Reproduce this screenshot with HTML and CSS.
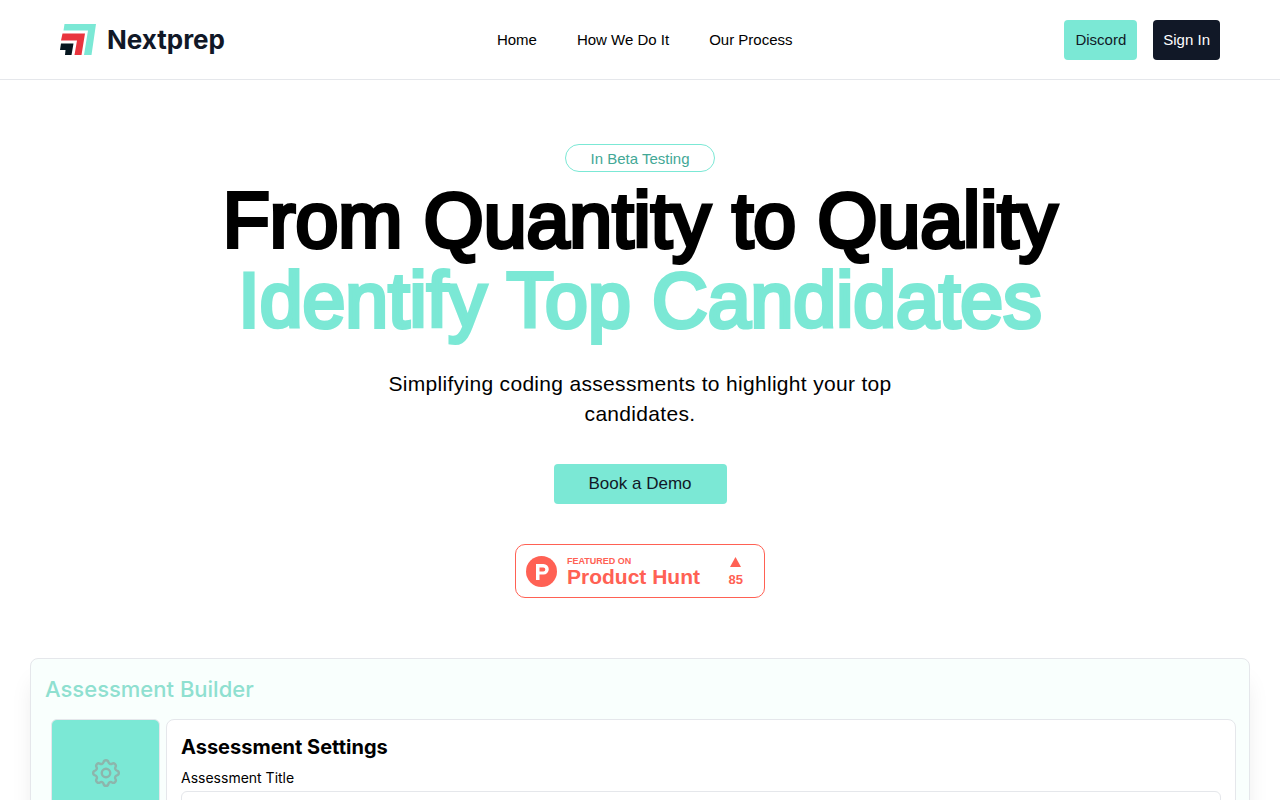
FILE: index.html
```html
<!DOCTYPE html>
<html lang="en">
<head>
<meta charset="utf-8">
<meta name="viewport" content="width=device-width, initial-scale=1">
<title>Nextprep</title>
<link rel="stylesheet" href="styles.css">
</head>
<body>

<header class="header">
  <a class="logo" href="#">
    <svg class="logo-mark" width="37" height="32" viewBox="0 0 37 32" aria-hidden="true">
      <path fill="#7be8d5" d="M4.500 0H36L31.500 31H24L28 6.500H3.500Z"/>
      <path fill="#e9353e" d="M2.500 9.500H25L21.500 31H14.500L17 16.500H1Z"/>
      <path fill="#06161f" d="M1 19.500H13.500L11.500 31H5L5.500 26H0Z"/>
    </svg>
    <span class="logo-text">Nextprep</span>
  </a>
  <nav class="nav">
    <a href="#">Home</a>
    <a href="#how">How We Do It</a>
    <a href="#process">Our Process</a>
  </nav>
  <div class="header-buttons">
    <button class="btn btn-mint" type="button">Discord</button>
    <button class="btn btn-dark" type="button">Sign In</button>
  </div>
</header>

<main>
  <section class="hero">
    <div class="beta">In Beta Testing</div>
    <h1 class="title">From Quantity to Quality<br><span class="title-mint">Identify Top Candidates</span></h1>
    <p class="subtitle">Simplifying coding assessments to highlight your top candidates.</p>
    <button class="btn btn-mint btn-demo" type="button">Book a Demo</button>
    <a class="ph" href="#">
      <svg class="ph-logo" width="31" height="31" viewBox="0 0 31 31" aria-hidden="true">
        <circle cx="15.500" cy="15.500" r="15.500" fill="#ff6154"/>
        <path fill="#fff" fill-rule="evenodd" d="M10 8H17.500A5 5 0 0 1 17.500 18.500H13.500V24H10ZM13.500 11.500V15.500H17.300A2 2 0 0 0 17.300 11.500Z"/>
      </svg>
      <span class="ph-text">
        <span class="ph-small">FEATURED ON</span>
        <span class="ph-name">Product Hunt</span>
      </span>
      <span class="ph-votes">
        <svg width="11" height="10" viewBox="0 0 11 10" aria-hidden="true"><path fill="#ff6154" d="M5.500 0L11 10H0Z"/></svg>
        <span>85</span>
      </span>
    </a>
  </section>

  <section class="builder">
    <h2 class="builder-title">Assessment Builder</h2>
    <div class="builder-body">
      <div class="builder-side">
        <svg width="34" height="34" viewBox="0 0 24 24" fill="none" stroke="#8db5ac" stroke-width="1.700" stroke-linecap="round" stroke-linejoin="round" aria-hidden="true">
          <circle cx="12" cy="12" r="3"/>
          <path d="M10.300 4.300c.4-1.800 3-1.800 3.400 0a1.700 1.700 0 0 0 2.600 1.100c1.500-.9 3.300.8 2.400 2.400a1.700 1.700 0 0 0 1 2.500c1.800.4 1.800 3 0 3.400a1.700 1.700 0 0 0-1 2.600c.9 1.500-.9 3.300-2.400 2.400a1.700 1.700 0 0 0-2.600 1c-.4 1.800-3 1.800-3.400 0a1.700 1.700 0 0 0-2.600-1c-1.500.9-3.300-.9-2.400-2.400a1.700 1.700 0 0 0-1-2.600c-1.800-.4-1.800-3 0-3.400a1.700 1.700 0 0 0 1-2.500c-.9-1.600.9-3.300 2.400-2.400a1.700 1.700 0 0 0 2.600-1.100z"/>
        </svg>
      </div>
      <div class="settings">
        <h3 class="settings-title">Assessment Settings</h3>
        <label class="settings-label" for="assessment-title">Assessment Title</label>
        <input class="settings-input" id="assessment-title" type="text">
      </div>
    </div>
  </section>
</main>

</body>
</html>
```
FILE: styles.css
```css
* {
  box-sizing: border-box;
}

body {
  margin: 0;
  background-color: #fff;
  color: #000;
  font-family: Arial, "Liberation Sans", sans-serif;
  font-size: 15px;
}

a {
  color: inherit;
  text-decoration: none;
}

/* header */

.header {
  display: flex;
  align-items: center;
  justify-content: space-between;
  height: 80px;
  padding: 0 60px;
  border-bottom: 1px solid #e5e7eb;
}

.logo {
  display: flex;
  align-items: center;
  gap: 10px;
}

.logo-text {
  color: #111827;
  font-family: Inter, sans-serif;
  font-size: 26px;
  font-weight: 700;
  line-height: 32px;
}

.nav {
  display: flex;
  gap: 40px;
}

.header-buttons {
  display: flex;
  gap: 16px;
}

.btn {
  height: 40px;
  border: 0;
  border-radius: 4px;
  font-family: inherit;
  font-size: 15px;
  cursor: pointer;
}

.btn-mint {
  padding: 0 11px;
  background-color: #7be8d5;
  color: #111827;
}

.btn-dark {
  padding: 0 10px;
  background-color: #111827;
  color: #fff;
}

/* hero */

.hero {
  display: flex;
  flex-direction: column;
  align-items: center;
  padding: 64px 30px 60px;
  text-align: center;
}

.beta {
  height: 28px;
  padding: 0 25px;
  border: 1px solid #7be8d5;
  border-radius: 14px;
  color: #43a896;
  line-height: 28px;
}

.title {
  margin: 8px 0 0;
  font-size: 77px;
  font-weight: 400;
  line-height: 80px;
  -webkit-text-stroke: 4px currentColor;
}

.title-mint {
  color: #7be8d5;
}

.subtitle {
  max-width: 560px;
  margin: 29px 0 35px;
  font-size: 21px;
  line-height: 30px;
  letter-spacing: 0.015em;
}

.btn-demo {
  padding: 0 35px;
  font-size: 17px;
}

.ph {
  display: flex;
  align-items: center;
  width: 250px;
  height: 54px;
  margin-top: 40px;
  padding: 2px 21px 0 10px;
  border: 1px solid #ff6154;
  border-radius: 10px;
  color: #ff6154;
  font-weight: 700;
}

.ph-logo {
  margin-bottom: 2px;
}

.ph-text {
  display: flex;
  flex-direction: column;
  margin-left: 10px;
  text-align: left;
}

.ph-small {
  font-size: 9px;
  line-height: 10px;
}

.ph-name {
  font-size: 21px;
  line-height: 22px;
}

.ph-votes {
  display: flex;
  flex-direction: column;
  align-items: center;
  gap: 5px;
  margin-left: auto;
  font-size: 13px;
  line-height: 16px;
}

/* assessment builder */

.builder {
  margin: 0 30px 60px;
  padding: 14px 13px;
  border: 1px solid #e5e7eb;
  border-radius: 8px;
  background-color: #f9fffd;
  box-shadow: 0 20px 25px -5px rgba(0, 0, 0, 0.1);
  font-family: Inter, sans-serif;
}

.builder-title {
  margin: 0 0 14px 1px;
  color: #8fe0d0;
  font-size: 22px;
  font-weight: 500;
  line-height: 32px;
}

.builder-body {
  display: flex;
  gap: 6px;
  min-height: 520px;
  padding-left: 7px;
}

.builder-side {
  display: flex;
  justify-content: center;
  align-items: flex-start;
  width: 109px;
  padding-top: 36px;
  border: 1px solid #e5e7eb;
  border-radius: 6px;
  background-color: #7be8d5;
}

.settings {
  flex: 1;
  padding: 14px;
  border: 1px solid #e5e7eb;
  border-radius: 8px;
  background-color: #fff;
}

.settings-title {
  margin: 0 0 8px;
  font-size: 20px;
  font-weight: 700;
  line-height: 26px;
}

.settings-label {
  display: block;
  margin-bottom: 3px;
  font-size: 14px;
  line-height: 20px;
}

.settings-input {
  display: block;
  width: 100%;
  height: 36px;
  padding: 0 10px;
  border: 1px solid #e5e7eb;
  border-radius: 6px;
  font: inherit;
}
```
